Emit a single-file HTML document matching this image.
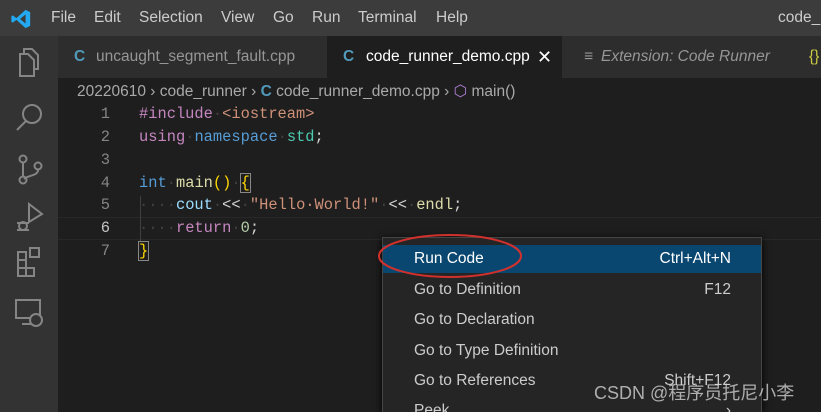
<!DOCTYPE html>
<html style="overflow:hidden;width:821px;height:412px"><head><style>
*{margin:0;padding:0;box-sizing:border-box}
body{width:821px;height:412px;overflow:hidden;background:#1e1e1e;font-family:"Liberation Sans",sans-serif;position:relative}
.abs{position:absolute}
#title{left:0;top:0;width:821px;height:36px;background:#3c3c3c;color:#ccc;font-size:15.5px}
#title span{position:absolute;top:9px}
#act{left:0;top:36px;width:58px;height:376px;background:#333}
#tabs{left:58px;top:36px;width:763px;height:42px;background:#252526}
.tab{position:absolute;top:0;height:42px;font-size:15.5px;line-height:42px;color:#969696}
.code{font-family:"Liberation Mono",monospace;font-size:15.4px;white-space:pre;position:absolute;left:139px;color:#d4d4d4}
.ln{position:absolute;left:60px;width:50px;text-align:right;font-family:"Liberation Mono",monospace;font-size:15.4px;color:#858585}
.dot{color:#404040}
#menu{left:382px;top:237px;width:380px;height:175px;background:#252526;border:1px solid #454545;border-bottom:none;box-shadow:0 2px 8px #000;overflow:hidden}
.mi{position:absolute;left:0;width:378px;height:28px;font-size:15.5px;color:#ccc;line-height:28px}
.mi .l{position:absolute;left:31px}
.mi .r{position:absolute;right:30px}
</style></head><body>
<div id="title" class="abs">
<svg class="abs" style="left:10px;top:8px" width="22" height="22" viewBox="0 0 24 24"><path d="M17 2 L22 4.5 V19.5 L17 22 L7 13 L3 16 L1.5 15 V9 L3 8 L7 11 L17 2 Z M17 7 L11 12 L17 17 Z" fill="#23a9f2" fill-rule="evenodd"/></svg>
<span style="left:51px">File</span><span style="left:94px">Edit</span><span style="left:139px">Selection</span><span style="left:221px">View</span><span style="left:273px">Go</span><span style="left:312px">Run</span><span style="left:358px">Terminal</span><span style="left:436px">Help</span><span style="left:778px">code_r</span>
</div>
<div id="act" class="abs">
<svg class="abs" style="left:14px;top:10px" width="30" height="320" viewBox="0 0 30 320" fill="none" stroke="#858585" stroke-width="2">
<path d="M6 8h8l6 6v16H6z M10 8V3h8l6 6v14h-4"/>
<circle cx="18" cy="68" r="9"/><path d="M12 75 L3 84"/>
<circle cx="9" cy="113" r="3.5"/><circle cx="9" cy="134" r="3.5"/><circle cx="24" cy="120" r="3.5"/><path d="M9 117v13 M24 124c0 6-10 5-14 9"/>
<path d="M15 158 L28 168 L15 176 Z"/><circle cx="9" cy="180" r="4"/><path d="M3 177h12 M3 184h12"/>
<path d="M4 214h8v8H4z M12 222h8v8h-8z M4 222h8v8H4z M4 214v-8h8v8 M16 202h9v9h-9z"/>
<path d="M2 254h24v18H2z M8 278h10"/><circle cx="22" cy="274" r="6" fill="#333"/>
</svg>
</div>
<div id="tabs" class="abs">
<div class="tab" style="left:0;width:269px;background:#2d2d2d"><span style="position:absolute;left:16px;color:#519aba;font-weight:bold">C</span><span style="position:absolute;left:38px">uncaught_segment_fault.cpp</span></div>
<div class="tab" style="left:269px;width:235px;background:#1e1e1e;color:#fff"><span style="position:absolute;left:16px;color:#519aba;font-weight:bold">C</span><span style="position:absolute;left:39px">code_runner_demo.cpp</span><span style="position:absolute;left:210px;font-size:18px">✕</span></div>
<div class="tab" style="left:504px;width:231px;background:#2d2d2d;font-style:italic"><span style="position:absolute;left:22px;font-style:normal">≡</span><span style="position:absolute;left:39px">Extension: Code Runner</span></div>
<div class="tab" style="left:735px;width:28px;background:#2d2d2d;color:#cbcb41"><span style="position:absolute;left:16px">{}</span></div>
</div>
<div class="abs" style="left:77px;top:82px;font-size:15.5px;color:#a9a9a9">20220610 <span>›</span> code_runner <span>›</span> <b style="color:#519aba">C</b> code_runner_demo.cpp <span>›</span> <span style="color:#b180d7">⬡</span> main()</div>
<div class="abs" style="left:58px;top:217px;width:763px;height:23px;border-top:1px solid #282828;border-bottom:1px solid #282828"></div>
<div class="ln" style="top:105px">1</div><div class="ln" style="top:128px">2</div><div class="ln" style="top:151px">3</div><div class="ln" style="top:174px">4</div><div class="ln" style="top:196px">5</div><div class="ln" style="top:219px;color:#c6c6c6">6</div><div class="ln" style="top:242px">7</div>
<div class="abs" style="left:140px;top:196px;width:1px;height:45px;background:#404040"></div>
<div class="code" style="top:105px"><span style="color:#c586c0">#include</span><span class="dot">·</span><span style="color:#ce9178">&lt;iostream&gt;</span></div>
<div class="code" style="top:128px"><span style="color:#c586c0">using</span><span class="dot">·</span><span style="color:#569cd6">namespace</span><span class="dot">·</span><span style="color:#4ec9b0">std</span>;</div>
<div class="code" style="top:174px"><span style="color:#569cd6">int</span><span class="dot">·</span><span style="color:#dcdcaa">main</span><span style="color:#ffd700">()</span><span class="dot">·</span><span style="color:#ffd700;outline:1px solid #888">{</span></div>
<div class="code" style="top:196px"><span class="dot">····</span><span style="color:#9cdcfe">cout</span><span class="dot">·</span>&lt;&lt;<span class="dot">·</span><span style="color:#ce9178">"Hello·World!"</span><span class="dot">·</span>&lt;&lt;<span class="dot">·</span><span style="color:#dcdcaa">endl</span>;</div>
<div class="code" style="top:219px"><span class="dot">····</span><span style="color:#c586c0">return</span><span class="dot">·</span><span style="color:#b5cea8">0</span>;</div>
<div class="code" style="top:242px"><span style="color:#ffd700;outline:1px solid #888">}</span></div>
<div id="menu" class="abs">
<div class="mi" style="top:7px;background:#094771;color:#fff"><span class="l">Run Code</span><span class="r">Ctrl+Alt+N</span></div>
<div class="mi" style="top:38px"><span class="l">Go to Definition</span><span class="r">F12</span></div>
<div class="mi" style="top:68px"><span class="l">Go to Declaration</span></div>
<div class="mi" style="top:99px"><span class="l">Go to Type Definition</span></div>
<div class="mi" style="top:129px"><span class="l">Go to References</span><span class="r">Shift+F12</span></div>
<div class="mi" style="top:159px"><span class="l">Peek</span><span class="r">›</span></div>
</div>
<svg class="abs" style="left:370px;top:228px" width="170" height="60"><ellipse cx="80" cy="28" rx="71" ry="21" fill="none" stroke="#d0312d" stroke-width="2"/></svg>
<div class="abs" style="left:594px;top:379px;font-size:18px;color:rgba(220,220,220,0.75);font-family:'Liberation Sans','Noto Sans CJK SC',sans-serif">CSDN @程序员托尼小李</div>
</body></html>
